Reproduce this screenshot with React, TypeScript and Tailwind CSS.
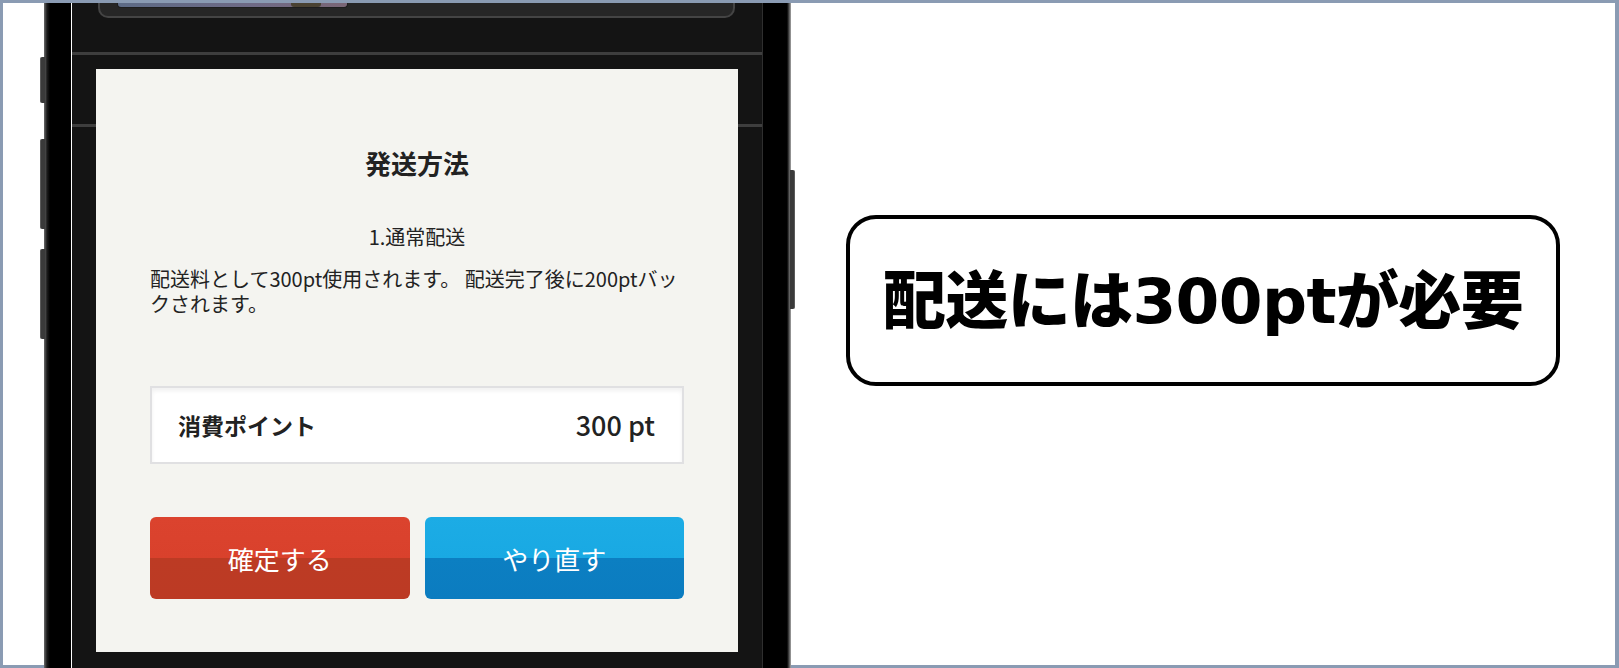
import React from "react";

const jp = "font-['Noto_Sans_CJK_JP','Noto_Sans_CJK_SC',sans-serif]";

function SideButton({ className }: { className: string }) {
  return (
    <div
      className={`absolute w-[5px] rounded-l-[2px] bg-[#3a3a3a] border-l border-[#5a5a5a] ${className}`}
    />
  );
}

function StatusStrip() {
  // the dark header card cut off at the top of the screen
  return (
    <div className="h-[49px] pl-[26px]">
      <div className="relative h-[15px] w-[637px] rounded-b-[10px] border-x-2 border-b-2 border-[#444] bg-[#262626]">
        <div className="absolute left-[17px] top-0 h-[5px] w-[231px] rounded-b-[4px] border-x border-b border-[#1d1d1d] bg-[linear-gradient(to_right,#5d6b86,#6f6a86_60%,#7a6676)]" />
        <div className="absolute left-[191px] top-0 h-[4px] w-[30px] rounded-b-[3px] bg-[#4a4232]" />
      </div>
    </div>
  );
}

function ShippingSheet() {
  return (
    <div
      className={`absolute left-[24px] top-[66px] flex h-[583px] w-[642px] flex-col bg-[#f4f4f0] px-[54px] pt-[78px] text-[#222] ${jp}`}
    >
      <h2 className="text-center text-[26px] font-bold leading-[32px]">発送方法</h2>
      <p className="mt-[45px] text-center text-[20px] leading-[25px]">1.通常配送</p>
      <p className="mt-[17px] text-[20px] leading-[25px]">
        配送料として300pt使用されます。 配送完了後に200ptバックされます。
      </p>

      <div className="mt-[70px] flex h-[78px] items-center justify-between border-2 border-[#e0e0e2] bg-white pl-[26px] pr-[27px] shadow-[inset_0_3px_4px_rgba(0,0,0,0.06)]">
        <span className="text-[23px] font-bold">消費ポイント</span>
        <span className="text-[27px] font-medium">300 pt</span>
      </div>

      <div className="mt-[53px] grid grid-cols-2 gap-[15px]">
        <button className="flex h-[82px] flex-col overflow-hidden rounded-[6px] text-white">
          <span className="relative flex h-full w-full items-center justify-center bg-[linear-gradient(to_bottom,#db432e_0%,#d9412c_50%,#bc3b24_50%,#bc3a24_100%)] text-[26px] font-normal">
            確定する
          </span>
        </button>
        <button className="flex h-[82px] flex-col overflow-hidden rounded-[6px] text-white">
          <span className="relative flex h-full w-full items-center justify-center bg-[linear-gradient(to_bottom,#1cace5_0%,#19a9e3_50%,#0c7fc2_50%,#0b7cc0_100%)] text-[26px] font-normal">
            やり直す
          </span>
        </button>
      </div>
    </div>
  );
}

function Phone() {
  return (
    <div className="relative -mb-[3px] ml-[41px] flex h-[665px] w-[747px] shrink-0">
      <SideButton className="-left-[4px] top-[54px] h-[46px]" />
      <SideButton className="-left-[4px] top-[136px] h-[90px]" />
      <SideButton className="-left-[4px] top-[246px] h-[90px]" />
      <div className="absolute left-[746px] top-[167px] h-[139px] w-[5px] rounded-r-[2px] border-r border-[#5a5a5a] bg-[#3a3a3a]" />

      {/* left bezel */}
      <div className="h-full w-[28px] border-r border-white bg-[linear-gradient(to_right,#6a6a6a_0px,#1c1c1c_3px,#000_6px,#000_100%)]" />

      {/* screen */}
      <div className="relative flex h-full w-[690px] flex-col bg-[#141414]">
        <StatusStrip />
        <div className="h-[3px] bg-[#3e3e3e]" />
        <div className="h-[69px]" />
        <div className="h-[3px] bg-[#3e3e3e]" />
        <div className="flex-1" />
        <ShippingSheet />
      </div>

      {/* right bezel */}
      <div className="h-full w-[29px] border-l border-[#2f2f2f] bg-[linear-gradient(to_right,#000_0px,#000_24px,#4a4a4a_26px,#a8a8a8_28px)]" />
    </div>
  );
}

export default function App() {
  return (
    <div className="h-[668px] w-[1619px] bg-[#8a9bb3] pb-[3px] pl-[3px] pr-[4px] pt-[3px]">
      <div className="flex h-full w-full bg-white">
        <Phone />
        <div className="flex flex-1 justify-center pt-[212px]">
          <div className="flex h-[171px] w-[714px] items-center justify-center rounded-[30px] border-[4px] border-black bg-white pb-[4px]">
            <span className={`text-[63px] font-black leading-none tracking-[-0.01em] text-black ${jp}`}>
              配送には
              <span className="font-['DejaVu_Sans',sans-serif] font-bold">300pt</span>
              が必要
            </span>
          </div>
        </div>
      </div>
    </div>
  );
}
